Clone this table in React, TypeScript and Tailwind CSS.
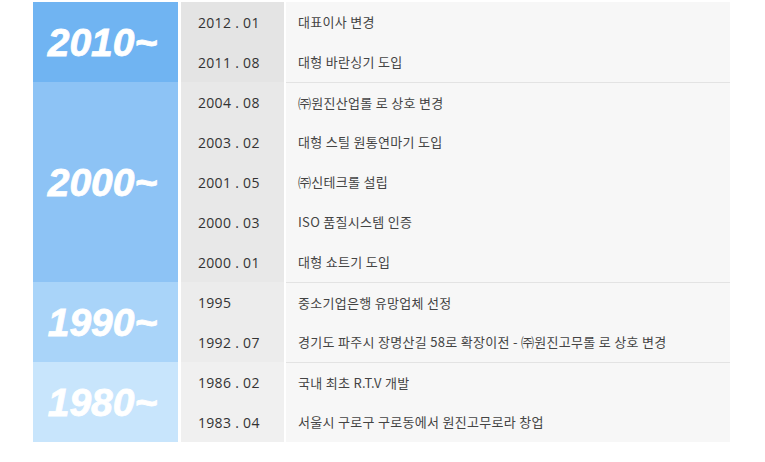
const groups = [
  {
    label: "2010~",
    labelBg: "bg-[#70b4f2]",
    dateBg: "bg-[#e4e4e4]",
    items: [
      { date: "2012 . 01", text: "대표이사 변경" },
      { date: "2011 . 08", text: "대형 바란싱기 도입" },
    ],
  },
  {
    label: "2000~",
    labelBg: "bg-[#8dc3f5]",
    dateBg: "bg-[#e8e8e8]",
    items: [
      { date: "2004 . 08", text: "㈜원진산업롤 로 상호 변경" },
      { date: "2003 . 02", text: "대형 스틸 원통연마기 도입" },
      { date: "2001 . 05", text: "㈜신테크롤 설립" },
      { date: "2000 . 03", text: "ISO 품질시스템 인증" },
      { date: "2000 . 01", text: "대형 쇼트기 도입" },
    ],
  },
  {
    label: "1990~",
    labelBg: "bg-[#a9d4f9]",
    dateBg: "bg-[#ececec]",
    items: [
      { date: "1995", text: "중소기업은행 유망업체 선정" },
      { date: "1992 . 07", text: "경기도 파주시 장명산길 58로 확장이전 - ㈜원진고무롤 로 상호 변경" },
    ],
  },
  {
    label: "1980~",
    labelBg: "bg-[#c8e5fc]",
    dateBg: "bg-[#f0f0f0]",
    items: [
      { date: "1986 . 02", text: "국내 최초 R.T.V 개발" },
      { date: "1983 . 04", text: "서울시 구로구 구로동에서 원진고무로라 창업" },
    ],
  },
];

export default function App() {
  return (
    <div className="h-[462px] w-[765px] bg-white pl-[33px] pt-[2px] font-['Noto_Sans_CJK_KR','Noto_Sans',sans-serif]">
      <div className="flex w-[697px] flex-col">
        {groups.map((group, gi) => (
          <div key={group.label} className="flex">
            <div
              className={`flex w-[145px] items-center justify-center pr-[6px] ${group.labelBg}`}
            >
              <span className="font-['Liberation_Sans',Arial,sans-serif] text-[39px] font-bold italic leading-none text-white [-webkit-text-stroke:0.8px_white]">
                {group.label}
              </span>
            </div>
            <div className="ml-[3px] flex flex-1 flex-col">
              {group.items.map((item, ii) => (
                <div key={item.date + ii} className="flex h-[40px]">
                  <div
                    className={`flex w-[103px] items-center pl-[17px] font-['Open_Sans',sans-serif] text-[14px] tracking-[0.3px] text-[#333] ${group.dateBg}`}
                  >
                    {item.date}
                  </div>
                  <div
                    className={`ml-[2px] flex flex-1 items-center bg-[#f7f7f7] pl-[12px] text-[13px] tracking-[0.3px] text-[#444] ${
                      ii === 0 && gi > 0 ? "border-t border-[#e3e3e3]" : ""
                    }`}
                  >
                    {item.text}
                  </div>
                </div>
              ))}
            </div>
          </div>
        ))}
      </div>
    </div>
  );
}
